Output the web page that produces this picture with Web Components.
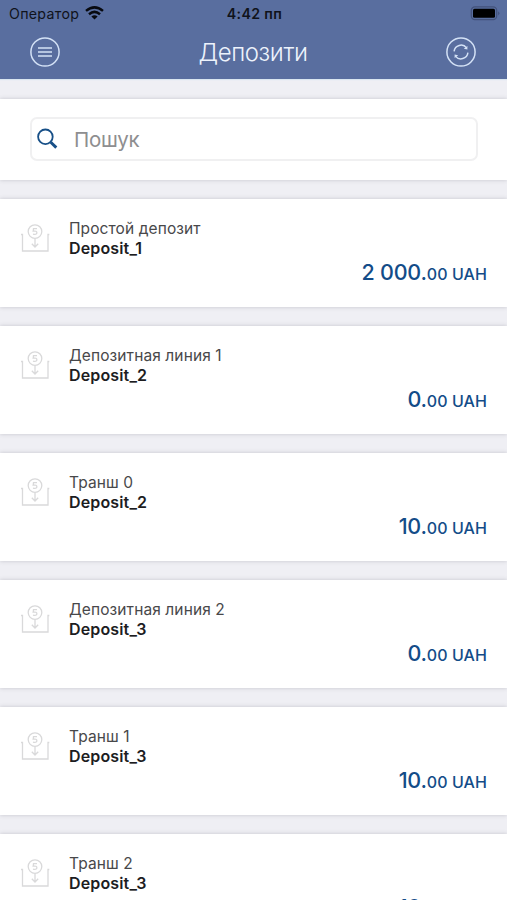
<!DOCTYPE html>
<html lang="uk">
<head>
<meta charset="utf-8">
<title>Депозити</title>
<style>
html,body{margin:0;height:900px;overflow:hidden;background:#efeff4}
body{font-family:Inter,"Liberation Sans",sans-serif}
</style>
</head>
<body>
<deposit-screen></deposit-screen>
<script>
const define=(name,html)=>customElements.define(name,class extends HTMLElement{
  constructor(){super();this.attachShadow({mode:'open'}).innerHTML=html;}
});

define('status-bar',`<style>
:host{display:grid;grid-template-columns:1fr auto 1fr;align-items:center;height:27px;padding:1px 7px 0 9px;color:#10131b;font-size:14.2px;line-height:26px;box-sizing:border-box}
.l{display:flex;align-items:center;gap:6px;letter-spacing:.3px}
.c{font-weight:600;font-size:14.2px;letter-spacing:.35px}
.r{display:flex;justify-content:flex-end}
svg{display:block;margin-top:-2px}
</style>
<div class="l"><span>Оператор</span><svg width="19" height="14" viewBox="0 0 19 14"><g fill="none" stroke="#080a10" stroke-width="2.5"><path d="M1 4.9Q9.5-2.1 18 4.9"/><path d="M4 8.2Q9.5 3.6 15 8.2"/></g><path d="M6.4 10.4Q9.5 7.9 12.6 10.4L9.5 13.6Z" fill="#080a10"/></svg></div>
<div class="c">4:42 пп</div>
<div class="r"><svg width="30" height="15" viewBox="0 0 30 15"><rect x="1.3" y=".9" width="25.4" height="12.8" rx="3.6" fill="none" stroke="#43527b" stroke-width="1.2"/><rect x="3" y="2.8" width="22" height="9" rx="1.5" fill="#000"/><path d="M28.2 5.2Q30.6 7.3 28.2 9.4Z" fill="#43527b"/></svg></div>`);

define('round-button',`<style>
:host{display:block;width:30px;height:30px;margin-bottom:2px}
</style><slot></slot>`);

define('nav-bar',`<style>
:host{display:grid;grid-template-columns:1fr auto 1fr;align-items:center;height:52px;padding:0 31px 0 30px;box-sizing:border-box;color:#edf3fc}
h1{margin:0;font-weight:300;font-size:24px;line-height:52px;letter-spacing:-.4px}
round-button:last-child{justify-self:end}
svg{display:block;fill:none;stroke:#d4e2f6;stroke-width:1.5}
</style>
<round-button><svg width="30" height="30" viewBox="0 0 30 30"><circle cx="15" cy="15" r="14.1"/><path d="M8 11H22M8 15H22M8 19H22"/></svg></round-button>
<h1><slot></slot></h1>
<round-button><svg width="30" height="30" viewBox="0 0 30 30"><circle cx="15" cy="15" r="14.1"/><path d="M8.1 14.3A7 7 0 0 1 20.6 10.9M21.9 15.7A7 7 0 0 1 9.4 19.1"/><path d="M21.4 8.9V12.5L17.8 11.8ZM8.6 21.1V17.5L12.2 18.2Z" fill="#d4e2f6" stroke="none"/></svg></round-button>`);

define('app-header',`<style>
:host{display:block;height:79px;background:#596e9f;box-shadow:0 1px 1px #d9e6f0}
</style><status-bar></status-bar><nav-bar><slot></slot></nav-bar>`);

define('surface-card',`<style>
:host{display:block;background:#fff;box-shadow:0 0 4px rgba(70,70,85,.25);box-sizing:border-box}
</style><slot></slot>`);

define('search-field',`<style>
:host{display:flex;align-items:center;height:44px;border:2px solid #f0f0f1;border-radius:7px;box-sizing:border-box;padding:0 5px;gap:16px;color:#8e8e90;font-size:20.5px;line-height:40px}
svg{display:block}
span{letter-spacing:-.3px;padding-top:2px}
</style><svg width="21" height="22" viewBox="0 0 21 22" fill="none" stroke="#174f87"><circle cx="8.4" cy="8.8" r="7.3" stroke-width="1.8"/><path d="M13.8 14.2L19.3 19.6" stroke-width="2.9"/></svg><span><slot></slot></span>`);

define('deposit-icon',`<style>:host{display:block;width:30px;height:30px}svg{display:block}</style>
<svg width="30" height="30" viewBox="0 0 30 30" fill="none" stroke="#d9d9da" stroke-width="1.3"><path d="M1 10.5H2.5V27H28V10.5H29.3"/><circle cx="15" cy="7.6" r="6.8"/><path d="M17 4.6H13.5L13.2 7.2Q16.9 6.5 16.9 8.9Q16.5 11 13 10.1"/><path d="M15 14.4V22.8M11.8 19.8L15 23L18.2 19.8"/></svg>`);

define('money-amount',`<style>
:host{display:block;text-align:right;color:#134c88;font-weight:500;font-size:16px;line-height:28px;letter-spacing:.08px;white-space:nowrap}
b{font-size:21.5px;font-weight:500;letter-spacing:-.2px}
</style><b><slot name="whole"></slot></b><slot></slot>`);

define('deposit-card',`<style>
:host{display:block}
surface-card{height:108px}
.row{display:grid;grid-template-columns:30px 1fr;column-gap:19px;padding:20px 20px 0;height:108px;box-sizing:border-box;grid-template-rows:39px 28px}
deposit-icon{margin-top:5px}
.name{font-size:15.5px;line-height:20px;letter-spacing:.1px;color:#48484a}
.code{font-size:16px;line-height:19px;letter-spacing:.15px;font-weight:600;color:#1d1d1f}
money-amount{grid-column:1/3}
</style><surface-card><div class="row"><deposit-icon></deposit-icon><div><div class="name"><slot name="name"></slot></div><div class="code"><slot name="code"></slot></div></div><money-amount><slot name="whole" slot="whole"></slot><slot name="minor"></slot></money-amount></div></surface-card>`);

const deposits=[
 ['Простой депозит','Deposit_1','2 000.'],
 ['Депозитная линия 1','Deposit_2','0.'],
 ['Транш 0','Deposit_2','10.'],
 ['Депозитная линия 2','Deposit_3','0.'],
 ['Транш 1','Deposit_3','10.'],
 ['Транш 2','Deposit_3','10.']
];
define('deposit-screen',`<style>
:host{display:block;width:507px;height:900px;overflow:hidden;background:#efeff4}
main{display:flex;flex-direction:column;gap:19px;padding-top:19.5px}
surface-card{padding:18px 29px 0 30px;height:81px;flex:none}
deposit-card{flex:none}
</style><app-header>Депозити</app-header><main><surface-card><search-field>Пошук</search-field></surface-card>${
 deposits.map(([n,c,w])=>`<deposit-card><span slot="name">${n}</span><span slot="code">${c}</span><span slot="whole">${w}</span><span slot="minor">00 UAH</span></deposit-card>`).join('')
}</main>`);
</script>
</body>
</html>
